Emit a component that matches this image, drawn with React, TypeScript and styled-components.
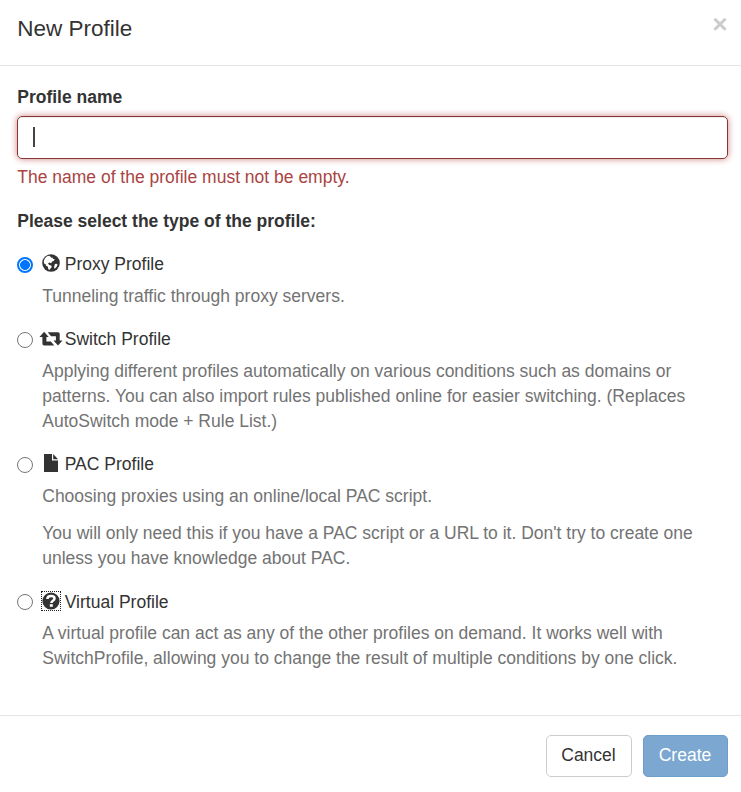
import React, { useState } from "react";
import styled, { createGlobalStyle } from "styled-components";

const GlobalStyle = createGlobalStyle`
  *, *::before, *::after { box-sizing: border-box; }
  body {
    margin: 0;
    background: #fff;
    color: #333;
    font: 17.5px/25px "Liberation Sans", Arial, sans-serif;
    overflow: hidden;
  }
`;

const Dialog = styled.main`
  display: flex;
  flex-direction: column;
  width: 100%;
  height: 792px;
`;

const Header = styled.header`
  display: flex;
  justify-content: space-between;
  align-items: flex-start;
  height: 66px;
  padding: 13px 13.5px 0 17.25px;
  border-bottom: 1px solid #e5e5e5;
`;

const Title = styled.h4`
  margin: 0;
  font-size: 22.5px;
  font-weight: 400;
  line-height: 32px;
`;

const CloseButton = styled.button`
  margin: -2px 0 0;
  padding: 0;
  border: 0;
  background: none;
  color: #000;
  opacity: 0.2;
  font: bold 26.25px/26px "Liberation Sans", Arial, sans-serif;
`;

const Body = styled.section`
  flex: none;
  height: 649px;
  padding: 18.75px 13px 0 17.25px;
`;

const FieldLabel = styled.label`
  display: block;
  margin-bottom: 6.25px;
  font-weight: 700;
`;

const NameField = styled.div`
  display: flex;
  align-items: center;
  height: 43px;
  padding: 0 0 2px 15px;
  border: 1px solid #843534;
  border-radius: 5px;
  box-shadow: inset 0 1px 1px rgba(0, 0, 0, 0.075), 0 0 7px #ce8483;
`;

const Caret = styled.span`
  width: 2px;
  height: 20px;
  background: #444;
`;

const ErrorText = styled.p`
  margin: 5.75px 0 18.75px;
  color: #a94442;
`;

const GroupTitle = styled.p`
  margin: 0 0 18px;
  font-weight: 700;
`;

const Option = styled.div`
  margin-bottom: 18px;
`;

const OptionLabel = styled.label<{ $lowered?: boolean }>`
  display: flex;
  align-items: center;
  height: 25px;
  padding-top: ${(p) => (p.$lowered ? 1 : 0)}px;
`;

const Radio = styled.input<{ $raised?: boolean }>`
  appearance: none;
  flex: none;
  width: 16px;
  height: 16px;
  margin: ${(p) => (p.$raised ? 0 : 2)}px 7px 0 0;
  border: 1px solid #767676;
  border-radius: 50%;
  background: #fff;

  &:checked {
    border: 2px solid #0075ff;
    background: radial-gradient(circle, #0075ff 4.6px, #fff 5.2px);
  }
`;

const IconSlot = styled.span<{ $dotted?: boolean }>`
  display: flex;
  flex: none;
  align-items: center;
  justify-content: center;
  width: 20px;
  height: 20px;
  margin: -2px 3.5px 0 1px;
  border: ${(p) => (p.$dotted ? "1px dotted #222" : "none")};

  svg { flex: none; display: block; overflow: visible; }
`;

const Description = styled.p<{ $gap?: number }>`
  margin: ${(p) => p.$gap ?? 7}px 0 0 25px;
  max-width: 670px;
  color: #737373;
`;

const Footer = styled.footer`
  display: flex;
  flex: 1;
  justify-content: flex-end;
  align-items: flex-start;
  gap: 11px;
  padding: 19px 13px 0;
  border-top: 1px solid #e5e5e5;
`;

const Button = styled.button<{ $primary?: boolean }>`
  width: ${(p) => (p.$primary ? 85 : 86)}px;
  height: 42px;
  padding: 0 1px 2px 0;
  border: 1px solid ${(p) => (p.$primary ? "#6d9dca" : "#ccc")};
  border-radius: 5px;
  background: ${(p) => (p.$primary ? "#7ba7d1" : "#fff")};
  color: ${(p) => (p.$primary ? "#fff" : "#333")};
  font: inherit;
`;

const GlobeIcon = () => (
  <svg width="18" height="18" viewBox="0 0 18 18">
    <circle cx="9" cy="9" r="8.8" fill="#333" />
    <path
      fill="#fff"
      d="M7.4 1.7 5 2.3 2.9 4.2 1.8 6.9 2 9.6 3.4 10 4.2 11.8 5.9 12.8 6.2 15 7.4 15.9 8.5 14.6 9.8 13.1 9.2 11.6 7.2 11 6 9.5 7.2 8.6 9.2 9.2 9.9 7.7 11.9 6.8 12.7 5 11.1 4.9 10.5 3.4 9.2 3.7 8.6 2.7zM12.9 10 14.5 9.8 15.6 10.7 14.5 12.9 12.6 14.8 12 13.2z"
    />
  </svg>
);

const RetweetIcon = () => (
  <svg width="23" height="14" viewBox="0.5 -0.7 23 14">
    <path
      fill="#333"
      d="M4.6 0 9.2 5.2H6.9v4.6h4.4l3.5 4H4.6q-1.7 0-1.7-1.7V5.2H0zM8.2.6h10.4q1.6 0 1.6 1.6v6.6H23l-4.5 5-4.5-5h2.4V4.5h-4.8z"
    />
  </svg>
);

const FileIcon = () => (
  <svg width="14" height="18" viewBox="0 0 14 18">
    <path fill="#333" d="M0 0h8v6.5h6V18H0zM9.2 0 14 5.2H9.2z" />
  </svg>
);

const QuestionIcon = () => (
  <svg width="18" height="18" viewBox="0 0 18 18">
    <circle cx="9" cy="9" r="8.6" fill="#333" />
    <path
      fill="none"
      stroke="#fff"
      strokeWidth="2.5"
      d="M5.4 7.1C5.4 4.9 6.8 4.1 9 4.1c2.1 0 3.5.9 3.5 2.5 0 2.3-3.1 2-3.1 4.3"
    />
    <path fill="#fff" d="M7.8 12.2h3v2.6h-3z" />
  </svg>
);

const options = [
  {
    id: "proxy",
    label: "Proxy Profile",
    icon: <GlobeIcon />,
    text: ["Tunneling traffic through proxy servers."],
  },
  {
    id: "switch",
    label: "Switch Profile",
    icon: <RetweetIcon />,
    text: [
      "Applying different profiles automatically on various conditions such as domains or patterns. You can also import rules published online for easier switching. (Replaces AutoSwitch mode + Rule List.)",
    ],
  },
  {
    id: "pac",
    label: "PAC Profile",
    icon: <FileIcon />,
    text: [
      "Choosing proxies using an online/local PAC script.",
      "You will only need this if you have a PAC script or a URL to it. Don't try to create one unless you have knowledge about PAC.",
    ],
  },
  {
    id: "virtual",
    label: "Virtual Profile",
    icon: <QuestionIcon />,
    dotted: true,
    text: [
      "A virtual profile can act as any of the other profiles on demand. It works well with SwitchProfile, allowing you to change the result of multiple conditions by one click.",
    ],
  },
];

export default function App() {
  const [selected, setSelected] = useState("proxy");
  return (
    <Dialog>
      <GlobalStyle />
      <Header>
        <Title>New Profile</Title>
        <CloseButton aria-label="Close">×</CloseButton>
      </Header>
      <Body>
        <FieldLabel>Profile name</FieldLabel>
        <NameField role="textbox" aria-label="Profile name" tabIndex={0}>
          <Caret />
        </NameField>
        <ErrorText>The name of the profile must not be empty.</ErrorText>
        <GroupTitle>Please select the type of the profile:</GroupTitle>
        {options.map((o) => (
          <Option key={o.id}>
            <OptionLabel $lowered={o.dotted}>
              <Radio
                $raised={o.dotted}
                type="radio"
                name="type"
                checked={selected === o.id}
                onChange={() => setSelected(o.id)}
              />
              <IconSlot $dotted={o.dotted}>{o.icon}</IconSlot>
              {o.label}
            </OptionLabel>
            {o.text.map((t, i) => (
              <Description key={t} $gap={i ? 12.5 : 7}>
                {t}
              </Description>
            ))}
          </Option>
        ))}
      </Body>
      <Footer>
        <Button>Cancel</Button>
        <Button $primary>Create</Button>
      </Footer>
    </Dialog>
  );
}
